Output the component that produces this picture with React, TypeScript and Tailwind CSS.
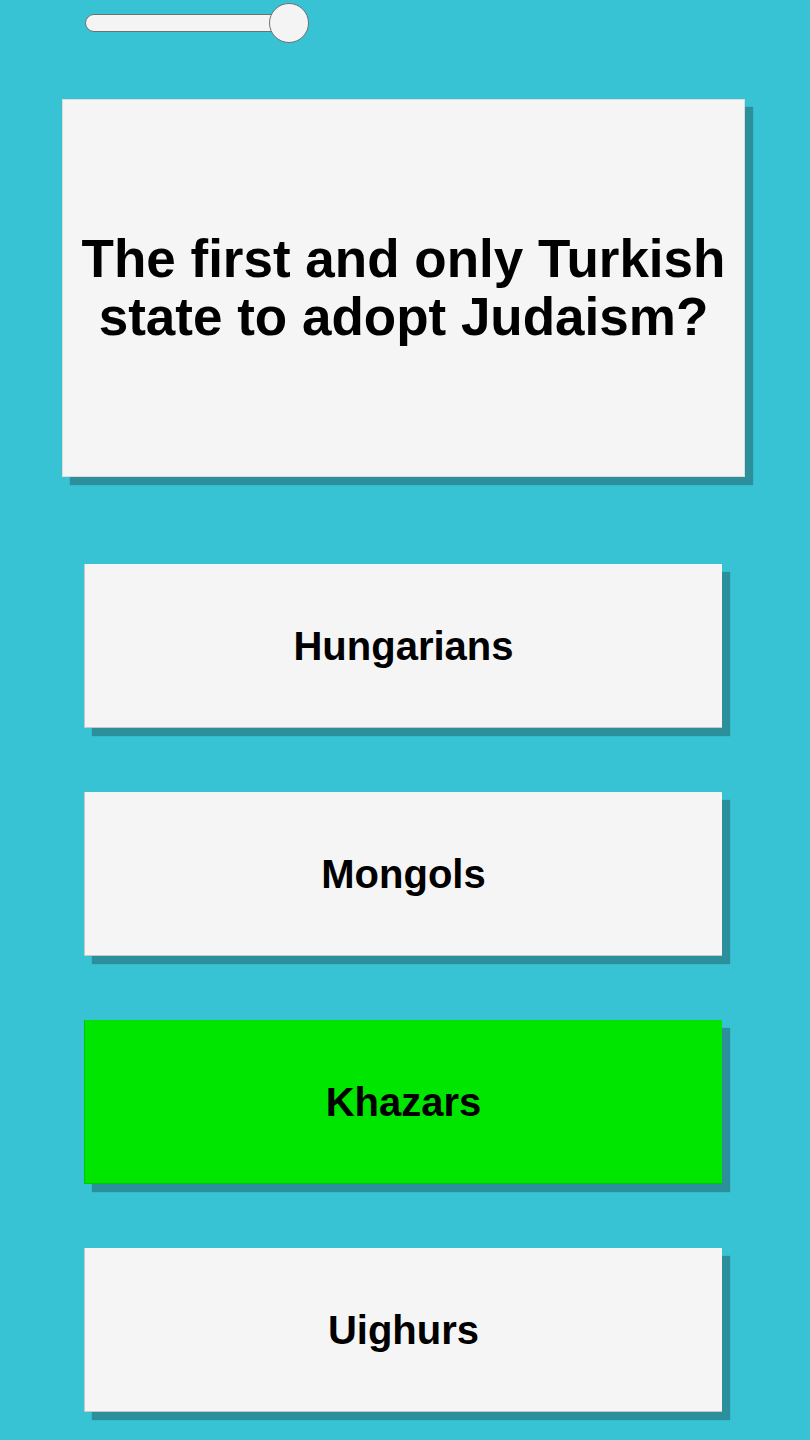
const answers = [
  { label: 'Hungarians', correct: false },
  { label: 'Mongols', correct: false },
  { label: 'Khazars', correct: true },
  { label: 'Uighurs', correct: false },
]

export default function App() {
  return (
    <div
      className="w-[810px] h-[1440px] overflow-hidden bg-[#38c3d4] relative"
      style={{ fontFamily: '"Liberation Sans", Arial, sans-serif' }}
    >
      {/* timer slider */}
      <div className="pt-[3px] pl-[85px] h-[99px]">
        <div className="flex items-center w-[224px] h-[40px]">
          <div className="w-[205px] h-[18px] rounded-full bg-[#f4f4f4] border border-[#707070] -mr-[20px]" />
          <div className="w-[40px] h-[40px] rounded-full bg-[#f4f4f4] border border-[#707070] relative" />
        </div>
      </div>

      {/* question */}
      <div className="ml-[62px] w-[683px] h-[378px] bg-[#f5f5f5] border border-[#dcdcdc] shadow-[8px_8px_1px_#2b909c] flex items-center justify-center px-1">
        <p className="text-[53px] leading-[58px] font-bold text-black text-center">
          The first and only Turkish state to adopt Judaism?
        </p>
      </div>

      {/* answers */}
      <div className="mt-[87px] ml-[84px] flex flex-col gap-[64px]">
        {answers.map((a) => (
          <div
            key={a.label}
            className={`w-[638px] h-[164px] flex items-center justify-center border-b border-l shadow-[8px_8px_1px_#2b909c] ${
              a.correct ? 'bg-[#00e600] border-[#00c800]' : 'bg-[#f5f5f5] border-[#c8c8c8]'
            }`}
          >
            <span className="text-[40px] font-bold text-black">{a.label}</span>
          </div>
        ))}
      </div>
    </div>
  )
}
